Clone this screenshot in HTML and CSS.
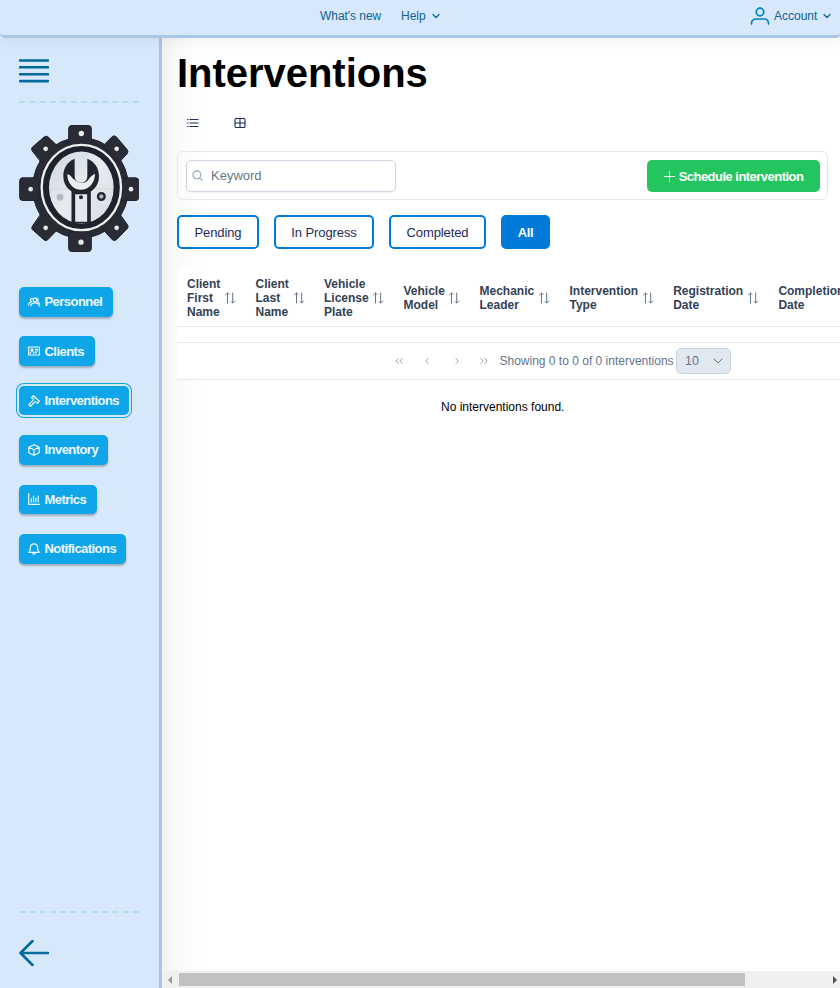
FILE: index.html
```
<!DOCTYPE html>
<html lang="en">
<head>
<meta charset="utf-8">
<title>Interventions</title>
<link rel="stylesheet" href="styles.css">
</head>
<body>
<header class="topbar">
  <a class="top-link whats-new">What's new</a>
  <a class="top-link help">Help <svg class="chev" viewBox="0 0 8 8"><path d="M1 2.5l3 3 3-3"/></svg></a>
  <a class="top-link account"><svg class="user" viewBox="0 0 20 18"><circle cx="10" cy="5" r="3.8"/><path d="M1.5 17v-.7c0-2.8 2-4.3 4.8-4.3h7.4c2.8 0 4.8 1.5 4.8 4.3v.7"/></svg><span>Account</span><svg class="chev" viewBox="0 0 8 8"><path d="M1 2.5l3 3 3-3"/></svg></a>
</header>
<div class="shell">
  <aside class="sidebar">
    <svg class="burger" viewBox="0 0 30 24"><path d="M1 1.5h28M1 8.3h28M1 15.3h28M1 22.1h28"/></svg>
    <svg class="dash" viewBox="0 0 120 2"><path d="M0 1h120"/></svg>
    <svg class="logo" viewBox="27 30 360 380">
      <defs>
        <linearGradient id="disc" x1="0" y1="0" x2="1" y2="1"><stop offset="0" stop-color="#cfd9de"/><stop offset=".5" stop-color="#e6ebee"/><stop offset="1" stop-color="#d5dce1"/></linearGradient>
      </defs>
      <g fill="#292c35" stroke="#20232c" stroke-width="3">
        <ellipse cx="212" cy="218" rx="144" ry="151"/>
        <rect x="176" y="31" width="68" height="60" rx="9"/>
        <rect x="176" y="350" width="68" height="59" rx="9"/>
        <rect x="29" y="188" width="60" height="68" rx="9"/>
        <rect x="328" y="188" width="58" height="68" rx="9"/>
        <path d="M66 106q-3-5 1-10l36-31q6-4 11 0l28 27-47 50zM318 64q-5-4-11 0l-27 27 46 52 26-28q4-6 0-11zM67 333q-4 5 0 10l36 32q6 3 10-1l29-30-48-48zM352 328q5 6 1 11l-34 35q-6 4-12 0l-28-31 48-48z"/>
      </g>
      <ellipse cx="214" cy="217" rx="119" ry="128" fill="#1d222c" stroke="#efefed" stroke-width="7"/>
      <ellipse cx="214" cy="217" rx="97" ry="108" fill="url(#disc)"/>
      <path d="M121 221h187" stroke="#c5cdd2" stroke-width="1.5"/>
      <path d="M190 322v-92h47v92" fill="#e3e8ec" stroke="#20252f" stroke-width="11"/>
      <path d="M192 322h43" stroke="#20252f" stroke-width="5"/>
      <path d="M194 131C171 140 160 160 160 183c0 32 24 53 54 53s53-21 53-53c0-24-13-43-35-52v53a18 18 0 0 1-38 0z" fill="#20252f"/>
      <path d="M172 177c11 2 12 10 22 17 8 8 18 10 26 9 12-1 17-14 23-19 6-4 8-6 12-8 0 26-17 48-42 48-23 0-42-21-41-47z" fill="#e8edf0"/>
      <path d="M197 235h33" stroke="#20252f" stroke-width="5"/>
      <circle cx="274" cy="244" r="10" fill="#aebac3" stroke="#20252f" stroke-width="7"/>
      <circle cx="150" cy="246" r="10" fill="#b2bac3"/>
      <circle cx="213" cy="246" r="6" fill="#20252f"/>
      <g fill="#e9e9e5"><circle cx="214" cy="55" r="8"/><circle cx="213" cy="381" r="8"/><circle cx="62" cy="222" r="7"/><circle cx="363" cy="222" r="7"/><circle cx="107" cy="101" r="7"/><circle cx="320" cy="101" r="7"/><circle cx="107" cy="338" r="7"/><circle cx="320" cy="338" r="7"/></g>
    </svg>
    <nav class="nav">
      <a class="nav-btn personnel"><svg viewBox="0 0 12 12"><circle cx="7" cy="4" r="1.8"/><path d="M2.7 10C3 7.800 4.800 6.800 7 6.800s4 1 4.400 3.200M4.700 2.500C3 2 2 3.200 2.600 4.500c.2.6.6.9 1 1.100C1.800 6 .8 6.800.6 8.800M8 2c2 0 2.500 2 1.200 3.300 1.200.4 1.900 1 2.200 2"/></svg>Personnel</a>
      <a class="nav-btn clients"><svg viewBox="0 0 12 12"><rect x=".6" y="2" width="10.800" height="8"/><circle cx="4" cy="4.800" r="1"/><path d="M2.200 8.500c.2-1.500 1-2 1.800-2s1.600.5 1.800 2M7.300 4.300h2.300M7.300 6h2.300M7.300 7.700h1"/></svg>Clients</a>
      <a class="nav-btn interventions active"><svg viewBox="0 0 12 12"><path d="M3.500 2.600L5.400.8l6 5.400-1.900 2.200-1.500-1.500-1-.1-4.600 4.500L.7 9.600l4.700-4.700-.2-1.200z"/></svg>Interventions</a>
      <a class="nav-btn inventory"><svg viewBox="0 0 12 12"><path d="M6 .7l5.200 2.500v5.600L6 11.300.8 8.800V3.200zM.8 3.200L6 5.700l5.200-2.500M6 5.700v5.600"/></svg>Inventory</a>
      <a class="nav-btn metrics"><svg viewBox="0 0 12 12"><path d="M.7.5v10.800h11M3.300 9V5.500M5.500 9V3.200M7.800 9V5M10.200 9V3"/></svg>Metrics</a>
      <a class="nav-btn notifications"><svg viewBox="0 0 12 12"><path d="M.8 9.300h10.400c-1.500-1.300-1.500-2-1.500-4.300C9.700 2.500 8.200.9 6 .9S2.300 2.500 2.300 5c0 2.300 0 3-1.500 4.300zM4.500 9.500c.2 2.300 2.800 2.300 3 0"/></svg>Notifications</a>
    </nav>
    <svg class="dash bottom" viewBox="0 0 120 2"><path d="M0 1h120"/></svg>
    <svg class="back" viewBox="0 0 30 26"><path d="M29 13H1.500M13.500 1L1.500 13l12 12"/></svg>
  </aside>
  <main class="main">
    <div class="content">
      <h1>Interventions</h1>
      <div class="views">
        <svg viewBox="0 0 12 12"><path d="M3 2.500h8M3 6h8M3 9.500h8M.5 2.500h.6M.5 6h.6M.5 9.500h.6"/></svg>
        <svg viewBox="0 0 12 12"><rect x="1" y="1.500" width="10" height="9" rx="1"/><path d="M6 1.500v9M1 6h10"/></svg>
      </div>
      <section class="toolbar">
        <div class="search"><svg viewBox="0 0 12 12"><circle cx="5.300" cy="5.300" r="4.300"/><path d="M8.500 8.500l2.800 2.800"/></svg><span>Keyword</span></div>
        <button class="schedule"><svg viewBox="0 0 12 12"><path d="M6 .5v11M.5 6h11"/></svg>Schedule intervention</button>
      </section>
      <div class="filters">
        <button class="pending">Pending</button><button class="progress">In Progress</button><button class="completed">Completed</button><button class="all">All</button>
      </div>
      <div class="table">
        <div class="thead">
          <div class="th"><span>Client<br>First<br>Name</span><svg class="sort" viewBox="0 0 12 12"><path d="M3.500 11V1M1.500 3l2-2L5 2.500M8.700 1v10M7.200 9.500l1.500 1.500 2-2"/></svg></div>
          <div class="th"><span>Client<br>Last<br>Name</span><svg class="sort" viewBox="0 0 12 12"><path d="M3.500 11V1M1.500 3l2-2L5 2.500M8.700 1v10M7.200 9.500l1.500 1.500 2-2"/></svg></div>
          <div class="th"><span>Vehicle<br>License<br>Plate</span><svg class="sort" viewBox="0 0 12 12"><path d="M3.500 11V1M1.500 3l2-2L5 2.500M8.700 1v10M7.200 9.500l1.500 1.500 2-2"/></svg></div>
          <div class="th"><span>Vehicle<br>Model</span><svg class="sort" viewBox="0 0 12 12"><path d="M3.500 11V1M1.500 3l2-2L5 2.500M8.700 1v10M7.200 9.500l1.500 1.500 2-2"/></svg></div>
          <div class="th"><span>Mechanic<br>Leader</span><svg class="sort" viewBox="0 0 12 12"><path d="M3.500 11V1M1.500 3l2-2L5 2.500M8.700 1v10M7.200 9.500l1.500 1.500 2-2"/></svg></div>
          <div class="th"><span>Intervention<br>Type</span><svg class="sort" viewBox="0 0 12 12"><path d="M3.500 11V1M1.500 3l2-2L5 2.500M8.700 1v10M7.200 9.500l1.500 1.500 2-2"/></svg></div>
          <div class="th"><span>Registration<br>Date</span><svg class="sort" viewBox="0 0 12 12"><path d="M3.500 11V1M1.500 3l2-2L5 2.500M8.700 1v10M7.200 9.500l1.500 1.500 2-2"/></svg></div>
          <div class="th"><span>Completion<br>Date</span></div>
        </div>
        <div class="tbody"></div>
        <div class="pager">
          <svg viewBox="0 0 10 10"><path d="M4.300 2.500L1.800 5l2.500 2.500M8.300 2.500L5.800 5l2.500 2.500"/></svg>
          <svg viewBox="0 0 10 10"><path d="M6 2.500L3.800 5 6 7.500"/></svg>
          <svg viewBox="0 0 10 10"><path d="M4 2.500L6.200 5 4 7.500"/></svg>
          <svg viewBox="0 0 10 10"><path d="M1.700 2.500L4.200 5 1.700 7.500M5.700 2.500L8.200 5 5.700 7.500"/></svg>
          <span class="report">Showing 0 to 0 of 0 interventions</span>
          <div class="rows"><span>10</span><svg viewBox="0 0 10 10"><path d="M1 3l4 4 4-4"/></svg></div>
        </div>
      </div>
      <p class="empty">No interventions found.</p>
    </div>
    <div class="scrollbar"><i class="arrow left"></i><i class="thumb"></i><i class="arrow right"></i></div>
  </main>
</div>
</body>
</html>
```
FILE: styles.css
```
* { box-sizing: border-box; }
body { margin: 0; width: 840px; height: 988px; overflow: hidden; background: #d7e8fb; font-family: "Liberation Sans", Arial, sans-serif; font-size: 12px; color: #000; display: flex; flex-direction: column; }
svg { display: block; flex: none; fill: none; stroke: currentColor; stroke-width: 1; stroke-linecap: round; stroke-linejoin: round; }
.topbar { position: relative; z-index: 2; height: 38px; flex: none; display: flex; padding: 9px 9px 0 320px; background: #d7e8fb; border-bottom: 3px solid #a8c6e5; border-radius: 0 0 5px 5px; box-shadow: 0 2px 14px rgba(0, 0, 0, .07); color: #0c6399; }
.top-link { display: flex; height: 14px; align-items: center; white-space: nowrap; }
.whats-new { width: 81px; letter-spacing: -.05px; }
.help { gap: 6px; }
.account { margin-left: auto; }
.account span { width: 49px; }
.chev { width: 8px; height: 8px; stroke-width: 1.2; }
.user { width: 20px; height: 18px; margin-right: 4px; color: #0284c7; stroke-width: 1.7; }
.shell { flex: 1; display: flex; min-height: 0; }
.sidebar { width: 162px; flex: none; padding: 21px 0 22px 19px; border-right: 3px solid #a8c6e5; display: flex; flex-direction: column; align-items: flex-start; }
.burger { width: 30px; height: 24px; color: #006b9c; stroke-width: 2.6; }
.dash { width: 120px; height: 2px; margin-top: 18px; stroke: #aedbf5; stroke-width: 2; stroke-linecap: butt; stroke-dasharray: 6 4.36; }
.logo { width: 120px; height: 127px; margin-top: 22px; stroke: none; }
.nav { display: flex; flex-direction: column; gap: 19.8px; margin-top: 35px; }
.nav-btn { height: 29.6px; display: flex; align-items: center; gap: 4.5px; padding: 0 9px; border-radius: 5px; background: #0ea5e9; color: #f0f9ff; font-size: 13px; font-weight: 700; letter-spacing: -.55px; white-space: nowrap; box-shadow: 0 2px 2px rgba(0, 0, 0, .25); }
.nav-btn svg { width: 12px; height: 12px; stroke-width: 1.2; }
.personnel { width: 94px; }
.clients { width: 76px; }
.interventions { width: 110px; }
.inventory { width: 89px; }
.metrics { width: 78px; }
.notifications { width: 107px; }
.active { box-shadow: 0 0 0 2px #d7e8fb, 0 0 0 3px #0ea5e9; }
.bottom { margin-top: auto; }
.back { width: 30px; height: 26px; margin-top: 27px; color: #006b9c; stroke-width: 2.6; }
.main { flex: 1; min-width: 0; display: flex; flex-direction: column; background: linear-gradient(90deg, #f2f2f2, #fafafa 16px, #fff 40px); }
.content { flex: 1; min-height: 0; overflow: hidden; padding: 12px 0 0 15px; }
h1 { margin: 0; font-size: 40px; line-height: 46px; letter-spacing: -.03px; }
.views { display: flex; gap: 35px; margin: 21px 0 0 10px; height: 12px; color: #1e2b5c; }
.views svg { width: 12px; height: 12px; stroke-width: 1.1; }
.toolbar { width: 651px; height: 49px; margin-top: 22px; padding: 8px 7px 7px 8px; border: 1px solid #e2e8f0; border-radius: 6px; display: flex; justify-content: space-between; align-items: center; }
.search { width: 210px; height: 32px; display: flex; align-items: center; gap: 8px; padding: 0 0 1px 5px; border: 1px solid #cbd5e1; border-radius: 5px; background: #fff; color: #64748b; font-size: 13px; box-shadow: 0 1px 2px rgba(18, 18, 23, .05); }
.search svg { width: 11px; height: 11px; color: #94a3b8; stroke-width: 1.2; }
button { font-family: inherit; font-size: 13px; margin: 0; padding: 0; border-radius: 5px; letter-spacing: -.1px; }
.schedule { width: 173px; height: 32px; display: flex; align-items: center; justify-content: center; gap: 4px; border: 0; background: #22c55e; color: #fff; font-size: 13px; font-weight: 700; letter-spacing: -.53px; }
.schedule svg { width: 11px; height: 11px; }
.filters { display: flex; gap: 15px; margin-top: 15px; }
.filters button { height: 34px; border: 2px solid #007ad9; background: #fff; color: #1e2b5c; }
.filters .pending { width: 82px; }
.filters .progress { width: 100px; }
.filters .completed { width: 97px; }
.filters .all { width: 49px; background: #007ad9; color: #fff; font-weight: 700; letter-spacing: -.4px; }
.table { width: 760px; margin-top: 20px; color: #334155; background: #fff; }
.thead { height: 58px; display: grid; grid-template-columns: 68.5px 68.5px 79.5px 76px 90px 103.7px 105.2px 1fr; border-bottom: 1px solid #e2e8f0; }
.th { display: flex; align-items: center; justify-content: space-between; padding: 0 9.5px 0 10px; font-weight: 700; line-height: 14px; }
.sort { width: 12px; height: 12px; color: #64748b; }
.tbody { height: 16px; border-bottom: 1px solid #e2e8f0; }
.pager { height: 37px; display: flex; align-items: center; padding-left: 217px; border-bottom: 1px solid #e2e8f0; color: #64748b; }
.pager > svg { width: 10px; height: 10px; margin-right: 18px; color: #94a3b8; }
.pager > svg:nth-child(2) { margin-right: 20px; }
.pager > svg:nth-child(3) { margin-right: 17px; }
.pager > svg:nth-child(4) { margin-right: 10.5px; }
.report { width: 176.5px; white-space: nowrap; }
.rows { width: 55px; height: 26px; display: flex; align-items: center; justify-content: space-between; padding: 0 7px 0 8px; border: 1px solid #cbd5e1; border-radius: 5px; background: #e2e8f0; font-size: 12.5px; }
.rows svg { width: 10px; height: 10px; }
.empty { margin: 20px 0 0 264px; line-height: 14px; }
.scrollbar { height: 17px; flex: none; background: #f0f0f0; display: flex; align-items: center; padding: 0 3px 0 6px; }
.arrow { border: 4px solid transparent; width: 0; height: 0; }
.left { border-left: 0; border-right: 4px solid #999; }
.thumb { width: 566px; height: 13px; margin-left: 7px; background: #c1c1c1; }
.right { margin-left: auto; border-right: 0; border-left: 4px solid #505050; }
```
